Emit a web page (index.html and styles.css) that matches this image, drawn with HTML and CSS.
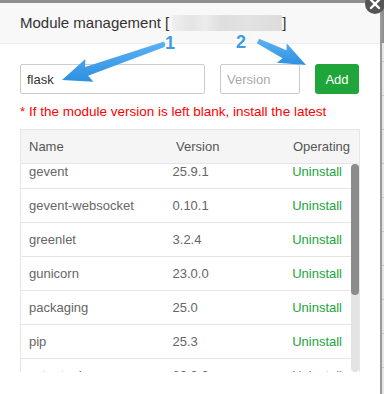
FILE: index.html
```html
<!DOCTYPE html>
<html lang="en">
<head>
    <meta charset="UTF-8">
    <meta name="viewport" content="width=device-width, initial-scale=1.0">
    <title>Module management</title>
    <link rel="stylesheet" href="styles.css">
</head>
<body>
    <div class="page">
        <div class="page-top"></div>
        <div class="page-rows">
            <div class="page-row"></div>
            <div class="page-row"></div>
            <div class="page-row"></div>
            <div class="page-row"></div>
            <div class="page-row"></div>
            <div class="page-row"></div>
            <div class="page-row"></div>
            <div class="page-row"></div>
            <div class="page-row"></div>
            <div class="page-row"></div>
        </div>
    </div>

    <div class="modal">
        <div class="modal-title">Module management [<span class="blurred"></span>]</div>
        <span class="modal-close">
            <svg width="20" height="20" viewBox="0 0 20 20">
                <path d="M6 6 L14 14 M14 6 L6 14" stroke="#fff" stroke-width="2.4" stroke-linecap="round"/>
            </svg>
        </span>

        <div class="modal-body">
            <div class="add-form">
                <input type="text" class="name-input" value="flask">
                <input type="text" class="version-input" placeholder="Version">
                <button class="btn-add">Add</button>
            </div>
            <p class="tip">* If the module version is left blank, install the latest</p>

            <div class="module-table">
                <table class="table-head">
                    <tr>
                        <th class="col-name">Name</th>
                        <th class="col-version">Version</th>
                        <th class="col-op">Operating</th>
                    </tr>
                </table>
                <div class="body-wrap">
                    <div class="table-body">
                        <table id="moduleRows"></table>
                    </div>
                    <div class="scrollbar">
                        <div class="scrollbar-thumb"></div>
                    </div>
                </div>
            </div>
        </div>

        <!-- markup arrows drawn on the screenshot -->
        <svg class="annotations" width="380" height="100" viewBox="0 0 380 100">
            <defs>
                <linearGradient id="arrowFill" x1="0" y1="0" x2="0" y2="1">
                    <stop offset="0" stop-color="#5ab2f4"/>
                    <stop offset="1" stop-color="#2f8fe0"/>
                </linearGradient>
            </defs>
            <polygon fill="url(#arrowFill)" points="164.2,41.6 85.1,67.1 85.4,59.1 62,80 93.4,81.7 88.1,75.7 165.8,46.4"/>
            <polygon fill="url(#arrowFill)" points="259.1,38.8 286.5,50.3 286.7,43.2 306,65 276.9,62.8 282.5,58.3 256.9,43.2"/>
            <text class="mark" x="170" y="49">1</text>
            <text class="mark" x="241" y="48">2</text>
        </svg>
    </div>

    <script>
        const modules = [
            ['gevent', '25.9.1'],
            ['gevent-websocket', '0.10.1'],
            ['greenlet', '3.2.4'],
            ['gunicorn', '23.0.0'],
            ['packaging', '25.0'],
            ['pip', '25.3'],
            ['setuptools', '80.9.0'],
            ['wheel', '0.45.1'],
            ['zope.event', '6.0'],
            ['zope.interface', '8.0.1']
        ];

        const rows = document.getElementById('moduleRows');
        for (const [name, version] of modules) {
            const tr = document.createElement('tr');
            tr.innerHTML = `
                <td class="col-name">${name}</td>
                <td class="col-version">${version}</td>
                <td class="col-op"><a class="btn-link">Uninstall</a></td>
            `;
            rows.appendChild(tr);
        }
    </script>
</body>
</html>
```

FILE: styles.css
```css
body {
    margin: 0;
    font-family: 'Liberation Sans', Arial, sans-serif;
    background-color: #e6e6e6;
    overflow: hidden;
}
.page-top {
    height: 43px;
    background-color: #8f8f8f;
}
.page-rows {
    padding-top: 18px;
}
.page-row {
    height: 33px;
    border-top: 1px solid #c8c8c8;
}
.modal {
    position: absolute;
    top: 3px;
    left: 0;
    width: 380px;
    height: 400px;
    background-color: #fff;
    box-shadow: 2px 0 0 #9a9a9a;
}
.modal-title {
    height: 40px;
    line-height: 40px;
    padding: 0 20px;
    background-color: #f8f8f8;
    border-bottom: 1px solid #eee;
    font-size: 15px;
    color: #333;
}
.blurred {
    display: inline-block;
    width: 110px;
    height: 16px;
    margin-left: 3px;
    vertical-align: -3px;
    background: linear-gradient(90deg, #efefef 0, #e4e4e4 18%, #ececec 30%, #dedede 45%, #e2e2e2 70%, #dcdcdc 100%);
}
.modal-close {
    position: absolute;
    top: -9px;
    right: -5px;
    width: 20px;
    height: 20px;
    border-radius: 50%;
    background-color: #555;
}
.modal-close svg {
    display: block;
}
.modal-body {
    padding: 20px 20px 0 20px;
}
.add-form {
    display: flex;
    gap: 15px;
}
.add-form input {
    box-sizing: border-box;
    height: 30px;
    padding: 0 6px;
    border: 1px solid #ccc;
    border-radius: 2px;
    font-family: inherit;
    font-size: 13px;
    color: #333;
    outline: none;
}
.name-input {
    width: 185px;
}
.version-input {
    width: 80px;
}
.version-input::placeholder {
    color: #aaa;
}
.btn-add {
    height: 30px;
    width: 44px;
    padding: 0;
    border: none;
    border-radius: 3px;
    background-color: #20a53a;
    color: #fff;
    font-family: inherit;
    font-size: 13px;
}
.tip {
    margin: 10px 0 9px 0;
    line-height: 16px;
    font-size: 13.5px;
    color: #f00;
    white-space: nowrap;
}
.module-table {
    width: 340px;
    box-sizing: border-box;
    border: 1px solid #e6e6e6;
    border-bottom: none;
}
.module-table table {
    width: 100%;
    border-collapse: collapse;
    table-layout: fixed;
    font-size: 13px;
}
.table-head {
    background-color: #f5f5f5;
}
.table-head th {
    height: 33px;
    padding: 0;
    font-weight: normal;
    color: #555;
    border-bottom: 1px solid #e6e6e6;
}
.body-wrap {
    display: flex;
    height: 208px;
}
.table-body {
    flex: 1;
    overflow: hidden;
}
.table-body table {
    margin-top: -9px;
}
.table-body td {
    height: 33px;
    padding: 0;
    color: #666;
    border-bottom: 1px solid #e6e6e6;
}
.col-name {
    width: 43.5%;
    padding-left: 8px !important;
    text-align: left;
}
.col-version {
    width: 31%;
    text-align: left;
}
.col-op {
    padding-right: 9px !important;
    text-align: right;
}
.btn-link {
    color: #20a53a;
    cursor: pointer;
}
.scrollbar {
    width: 8px;
    background-color: #e3e3e3;
    border-radius: 4px;
}
.scrollbar-thumb {
    height: 131px;
    background-color: #8c8c8c;
    border-radius: 4px;
}
.annotations {
    position: absolute;
    top: -3px;
    left: 0;
    pointer-events: none;
}
.mark {
    font-family: 'Liberation Sans', Arial, sans-serif;
    font-size: 18px;
    font-weight: bold;
    text-anchor: middle;
    fill: #3d9be8;
    stroke: #fff;
    stroke-width: 3px;
    paint-order: stroke;
}
```
